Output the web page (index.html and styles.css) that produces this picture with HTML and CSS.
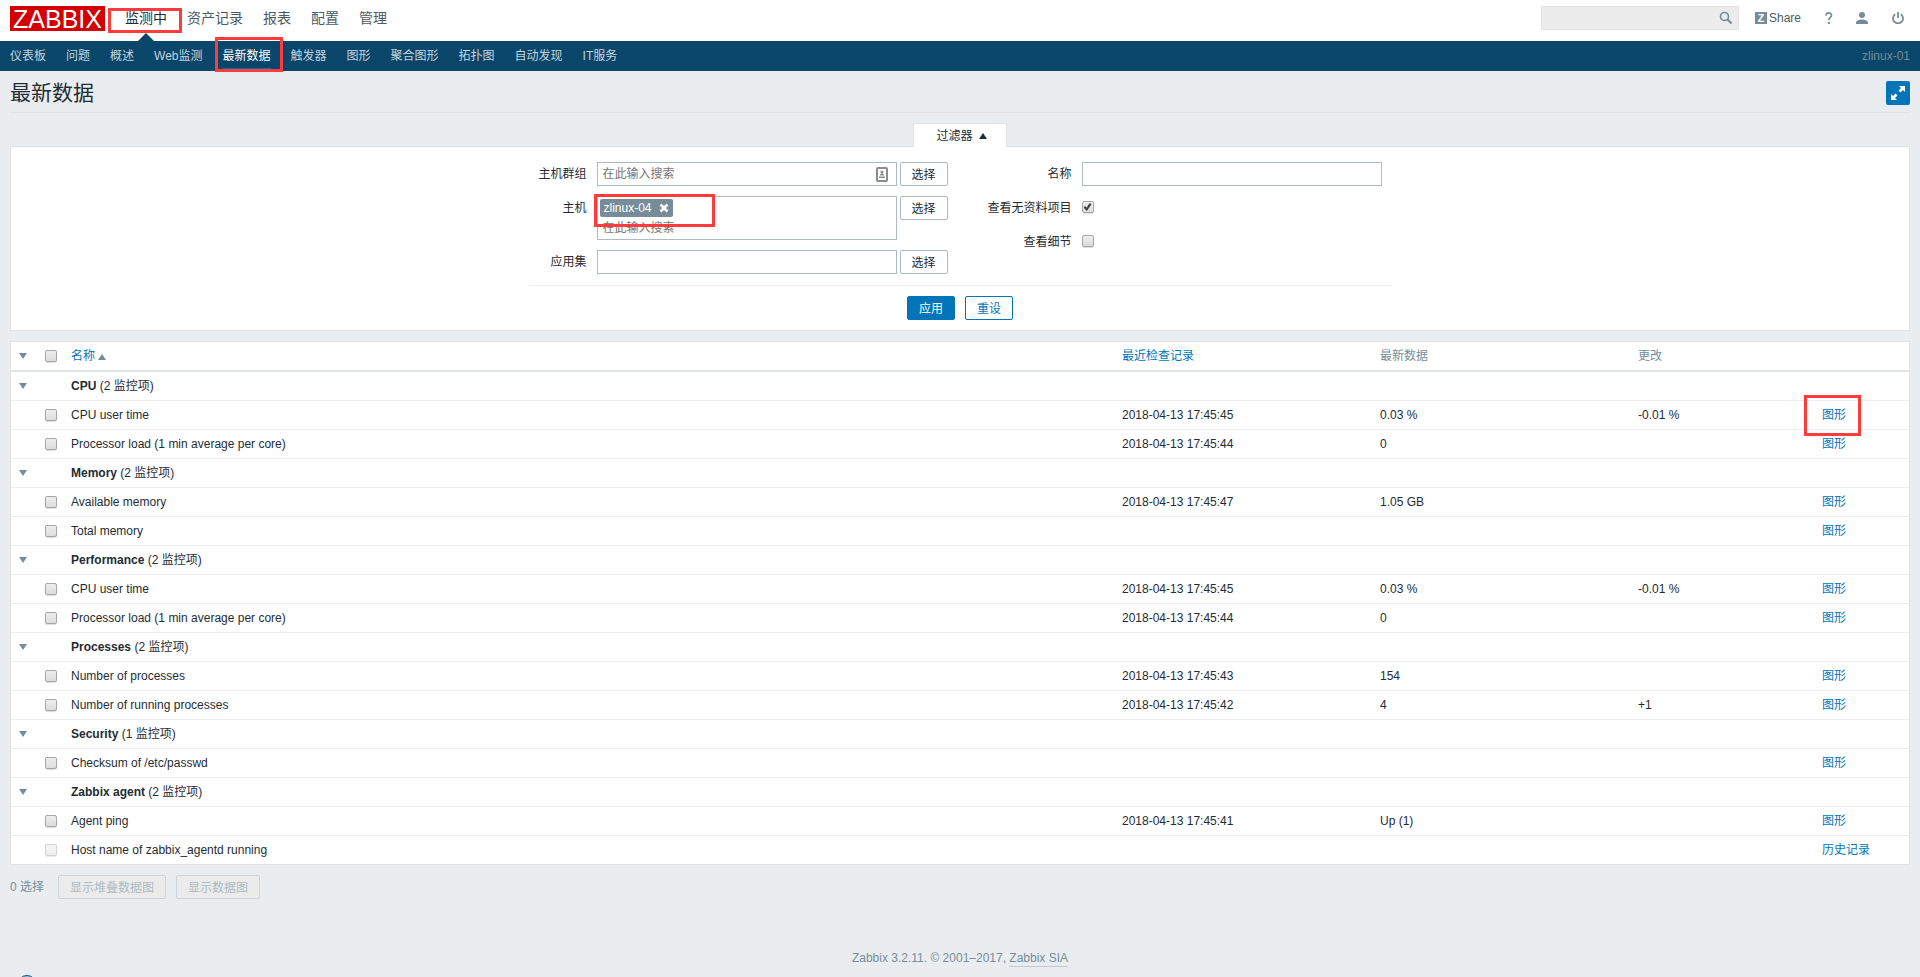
FILE: index.html
```html
<!DOCTYPE html>
<html lang="zh-CN">
<head>
<meta charset="utf-8">
<title>最新数据</title>
<link rel="stylesheet" href="styles.css">
</head>
<body>
<header class="top">
  <a class="logo" href="#">ZABBIX</a>
  <nav class="main-nav">
    <a class="active" href="#">监测中<span class="mark mark-main"></span></a>
    <a href="#">资产记录</a>
    <a href="#">报表</a>
    <a href="#">配置</a>
    <a href="#">管理</a>
  </nav>
  <div class="tools">
    <form class="search">
      <input type="text" aria-label="搜索">
      <button type="button" aria-label="搜索"><svg width="14" height="14" viewBox="0 0 14 14"><circle cx="5.5" cy="5.5" r="4" fill="none" stroke="#768d99" stroke-width="1.6"/><path d="M8.5 8.5L12.5 12.5" stroke="#768d99" stroke-width="2.2"/></svg></button>
    </form>
    <a class="share" href="#"><span class="share-z">Z</span>Share</a>
    <a class="help" href="#" aria-label="帮助"><svg width="8" height="12" viewBox="0 0 8 12"><path d="M1 3.500C1 0 6.500 0 6.500 3.200C6.500 5.500 3.800 5.200 3.800 8.300" fill="none" stroke="#768d99" stroke-width="1.700"/><rect x="2.800" y="10" width="2" height="2" fill="#768d99"/></svg></a>
    <a class="tool" href="#" aria-label="用户"><svg width="12" height="12" viewBox="0 0 12 12"><circle cx="6" cy="3" r="3" fill="#768d99"/><path d="M0 12V10.5C0 8.5 3.5 7.5 6 7.5S12 8.5 12 10.5V12Z" fill="#768d99"/></svg></a>
    <a class="tool" href="#" aria-label="退出"><svg width="12" height="12" viewBox="0 0 12 12"><path d="M3.2 2.2A5 5 0 1 0 8.8 2.2M6 0V6" fill="none" stroke="#768d99" stroke-width="1.8"/></svg></a>
  </div>
</header>
<nav class="sub-nav">
  <a href="#">仪表板</a>
  <a href="#">问题</a>
  <a href="#">概述</a>
  <a href="#">Web监测</a>
  <a class="active" href="#">最新数据<span class="mark mark-sub"></span></a>
  <a href="#">触发器</a>
  <a href="#">图形</a>
  <a href="#">聚合图形</a>
  <a href="#">拓扑图</a>
  <a href="#">自动发现</a>
  <a href="#">IT服务</a>
  <span class="server">zlinux-01</span>
</nav>
<main>
  <div class="title-row">
    <h1>最新数据</h1>
    <button class="fullscreen" type="button" aria-label="全屏"><svg width="16" height="16" viewBox="0 0 16 16" fill="#fff"><path d="M9 1H15V7L13 5L10.5 7.5L8.5 5.5L11 3Z"/><path d="M7 15H1V9L3 11L5.500 8.500L7.500 10.500L5 13Z"/></svg></button>
  </div>

  <section class="filter">
    <button class="filter-tab" type="button">过滤器<span class="tri up dark"></span></button>
    <form class="filter-box">
      <div class="filter-fields">
        <div class="fields-left">
          <label for="groups">主机群组</label>
          <div class="multi">
            <input id="groups" type="text" placeholder="在此输入搜索">
            <svg width="12" height="15" viewBox="0 0 12 15"><rect x="1" y="1" width="10" height="13" rx="1" fill="#fff" stroke="#8c8c8c" stroke-width="2"/><circle cx="6" cy="5" r="1.500" fill="#8c8c8c"/><path d="M4 8.500V7.500L6 6L8 7.500V8.500ZM3 9.500H9V11H3Z" fill="#8c8c8c"/></svg>
          </div>
          <button class="btn" type="button">选择</button>
          <label for="hosts">主机</label>
          <div class="multi tall">
            <span class="tag">zlinux-04<button type="button" aria-label="移除"><svg width="10" height="10" viewBox="0 0 10 10"><path d="M1.500 1.500L8.500 8.500M8.500 1.500L1.500 8.500" stroke="#fff" stroke-width="2.500"/></svg></button></span>
            <input id="hosts" type="text" placeholder="在此输入搜索">
            <span class="mark mark-host"></span>
          </div>
          <button class="btn" type="button">选择</button>
          <label for="app">应用集</label>
          <input class="text" id="app" type="text">
          <button class="btn" type="button">选择</button>
        </div>
        <div class="fields-right">
          <label for="name">名称</label>
          <input class="text" id="name" type="text">
          <label for="nodata">查看无资料项目</label>
          <input id="nodata" type="checkbox" checked>
          <label for="details">查看细节</label>
          <input id="details" type="checkbox">
        </div>
        <div class="actions">
          <button class="btn primary" type="button">应用</button>
          <button class="btn outline" type="button">重设</button>
        </div>
      </div>
    </form>
  </section>

  <table class="data">
    <colgroup><col class="c-toggle"><col class="c-check"><col><col class="c-wide"><col class="c-wide"><col class="c-change"><col class="c-link"></colgroup>
    <thead>
      <tr><th><span class="tri down"></span></th><th><input type="checkbox" aria-label="全选"></th><th><a href="#">名称<span class="tri up"></span></a></th><th><a href="#">最近检查记录</a></th><th>最新数据</th><th>更改</th><th></th></tr>
    </thead>
    <tbody>
      <tr><td><span class="tri down"></span></td><td></td><td colspan="5"><b>CPU</b> (2 监控项)</td></tr>
      <tr><td></td><td><input type="checkbox" aria-label="CPU user time"></td><td>CPU user time</td><td>2018-04-13 17:45:45</td><td>0.03 %</td><td>-0.01 %</td><td><a class="marked" href="#">图形<span class="mark mark-graph"></span></a></td></tr>
      <tr><td></td><td><input type="checkbox" aria-label="Processor load"></td><td>Processor load (1 min average per core)</td><td>2018-04-13 17:45:44</td><td>0</td><td></td><td><a href="#">图形</a></td></tr>
      <tr><td><span class="tri down"></span></td><td></td><td colspan="5"><b>Memory</b> (2 监控项)</td></tr>
      <tr><td></td><td><input type="checkbox" aria-label="Available memory"></td><td>Available memory</td><td>2018-04-13 17:45:47</td><td>1.05 GB</td><td></td><td><a href="#">图形</a></td></tr>
      <tr><td></td><td><input type="checkbox" aria-label="Total memory"></td><td>Total memory</td><td></td><td></td><td></td><td><a href="#">图形</a></td></tr>
      <tr><td><span class="tri down"></span></td><td></td><td colspan="5"><b>Performance</b> (2 监控项)</td></tr>
      <tr><td></td><td><input type="checkbox" aria-label="CPU user time"></td><td>CPU user time</td><td>2018-04-13 17:45:45</td><td>0.03 %</td><td>-0.01 %</td><td><a href="#">图形</a></td></tr>
      <tr><td></td><td><input type="checkbox" aria-label="Processor load"></td><td>Processor load (1 min average per core)</td><td>2018-04-13 17:45:44</td><td>0</td><td></td><td><a href="#">图形</a></td></tr>
      <tr><td><span class="tri down"></span></td><td></td><td colspan="5"><b>Processes</b> (2 监控项)</td></tr>
      <tr><td></td><td><input type="checkbox" aria-label="Number of processes"></td><td>Number of processes</td><td>2018-04-13 17:45:43</td><td>154</td><td></td><td><a href="#">图形</a></td></tr>
      <tr><td></td><td><input type="checkbox" aria-label="Number of running processes"></td><td>Number of running processes</td><td>2018-04-13 17:45:42</td><td>4</td><td>+1</td><td><a href="#">图形</a></td></tr>
      <tr><td><span class="tri down"></span></td><td></td><td colspan="5"><b>Security</b> (1 监控项)</td></tr>
      <tr><td></td><td><input type="checkbox" aria-label="Checksum of /etc/passwd"></td><td>Checksum of /etc/passwd</td><td></td><td></td><td></td><td><a href="#">图形</a></td></tr>
      <tr><td><span class="tri down"></span></td><td></td><td colspan="5"><b>Zabbix agent</b> (2 监控项)</td></tr>
      <tr><td></td><td><input type="checkbox" aria-label="Agent ping"></td><td>Agent ping</td><td>2018-04-13 17:45:41</td><td>Up (1)</td><td></td><td><a href="#">图形</a></td></tr>
      <tr><td></td><td><input type="checkbox" aria-label="Host name" disabled></td><td>Host name of zabbix_agentd running</td><td></td><td></td><td></td><td><a href="#">历史记录</a></td></tr>
    </tbody>
  </table>

  <div class="bulk">
    <span class="count">0 选择</span>
    <button class="btn" type="button" disabled>显示堆叠数据图</button>
    <button class="btn" type="button" disabled>显示数据图</button>
  </div>
</main>
<footer>Zabbix 3.2.11. © 2001–2017, <a href="#">Zabbix SIA</a></footer>
<span class="bubble"></span>
</body>
</html>
```

FILE: styles.css
```css
* { box-sizing: border-box; }
html { height: 100%; }
body {
  margin: 0;
  min-height: 100%;
  display: flex;
  flex-direction: column;
  position: relative;
  overflow: hidden;
  background: #e9edf0;
  color: #1f2c33;
  font: 12px/16px "Liberation Sans", "Noto Sans CJK SC", sans-serif;
}
a { color: #0275b8; text-decoration: none; }
button, input { font: inherit; color: inherit; margin: 0; }
button { cursor: pointer; }
svg { display: block; }

/* Header */
.top { display: flex; align-items: flex-start; height: 41px; padding: 0 10px; background: #fff; }
.logo {
  width: 95px;
  height: 25px;
  margin: 6px 10px 0 0;
  background: #d40000;
  color: #fff;
  font-size: 25px;
  line-height: 26px;
  text-align: center;
}
.main-nav { display: flex; }
.main-nav a { position: relative; padding: 0 10px; font-size: 14px; line-height: 36px; height: 41px; color: #4d5a61; }
.main-nav .active { color: #1f2c33; }
.main-nav .active::after {
  content: "";
  position: absolute;
  left: 50%;
  bottom: 0;
  margin-left: -8px;
  border: 8px solid transparent;
  border-top: 0;
  border-bottom-color: #0a466a;
}
.tools { display: flex; align-items: center; height: 24px; margin: 6px 6px 0 auto; }
.search { display: flex; align-items: center; width: 198px; height: 24px; margin-right: 16px; padding-right: 5px; background: #ececec; border: 1px solid #e2e2e2; }
.search input { flex: 1; min-width: 0; height: 22px; border: 0; padding: 0 4px; background: none; }
.search button { border: 0; padding: 0; background: none; }
.share { display: flex; align-items: center; gap: 2px; margin-right: 24px; color: #4d5a61; }
.share-z { width: 12px; height: 12px; background: #768d99; color: #fff; font-size: 11px; font-weight: bold; line-height: 12px; text-align: center; }
.tool { margin-left: 24px; }
.help + .tool { margin-left: 23px; }

.sub-nav { display: flex; height: 30px; padding: 0 10px; gap: 20px; background: #0a466a; line-height: 30px; }
.sub-nav a { position: relative; color: #c3d4de; height: 29px; }
.sub-nav .active { color: #fff; border-bottom: 2px solid #0275b8; }
.server { margin-left: auto; color: #768d99; }

/* Highlight frames */
.mark { position: absolute; border: 3px solid #ff3b3b; pointer-events: none; z-index: 2; }
.mark-main { inset: 8px -5px 8px -7px; }
.mark-sub { inset: -4px -12px -4px -8px; }
.mark-host { left: -4px; top: -3px; width: 121px; height: 33px; }
.mark-graph { inset: -12px -15px -13px -18px; }

/* Page */
main { padding: 0 10px; }
.title-row { display: flex; align-items: center; justify-content: space-between; height: 42px; padding-top: 3px; border-bottom: 1px solid #dfe4e7; margin-bottom: 10px; }
h1 { margin: 0; font-size: 21px; line-height: 24px; font-weight: 400; }
.fullscreen { width: 24px; height: 24px; padding: 4px; border: 0; border-radius: 2px; background: #0275b8; }

.filter { display: flex; flex-direction: column; align-items: center; }
.filter-tab { display: flex; align-items: center; position: relative; z-index: 1; height: 24px; margin-bottom: -1px; padding: 1px 19px 0 22px; background: #fff; border: 1px solid #dfe4e7; border-bottom: 0; }
.filter-box { display: flex; justify-content: center; width: 100%; padding: 15px 0 10px; background: #fff; border: 1px solid #dfe4e7; }
.filter-fields { display: grid; grid-template-columns: auto auto; column-gap: 40px; }
.fields-left { display: grid; grid-template-columns: 58px 313px 48px; row-gap: 10px; align-items: start; }
.fields-left label, .fields-right label { line-height: 24px; text-align: right; }
.fields-left .multi, .fields-left .text { margin-left: 10px; margin-right: 3px; }
.fields-right { display: grid; grid-template-columns: 84px 300px; column-gap: 10px; grid-auto-rows: 24px; row-gap: 10px; padding-right: 10px; }
.fields-right input[type="checkbox"] { margin-top: 5px; }
.text { height: 24px; border: 1px solid #acbbc2; padding: 0 4px; background: #fff; min-width: 0; }
.multi { position: relative; display: flex; align-items: center; height: 24px; border: 1px solid #acbbc2; padding-right: 8px; }
.multi input { flex: 1; min-width: 0; height: 22px; border: 0; padding: 0 5px; background: none; }
.multi input::placeholder { color: #757575; opacity: 1; }
.tall { height: 44px; flex-direction: column; align-items: flex-start; padding: 2px 2px 0; }
.tall input { flex: none; width: 100%; padding: 0 3px; }
.tag { display: flex; align-items: center; gap: 7px; height: 18px; padding: 0 4px; border-radius: 2px; background: #768d99; color: #fff; }
.tag button { border: 0; padding: 0; background: none; }

.btn { height: 24px; padding: 1px 11px 0; border: 1px solid #acbbc2; border-radius: 2px; background: #fff; line-height: 22px; }
.primary { background: #0275b8; border-color: #0275b8; color: #fff; }
.outline { border-color: #0275b8; color: #0275b8; }
.btn:disabled { background: #ebebeb; border-color: #ccd5d9; color: #acbbc2; }
.actions { grid-column: 1 / -1; display: flex; justify-content: center; gap: 10px; margin-top: 11px; padding-top: 10px; border-top: 1px solid #ebeef0; }

input[type="checkbox"] {
  appearance: none;
  display: block;
  position: relative;
  width: 12px;
  height: 12px;
  border: 1px solid #a6a6a6;
  border-radius: 2px;
  background: linear-gradient(#eee, #dcdcdc);
  box-shadow: 0 1px 1px #ddd;
}
input[type="checkbox"]:disabled { opacity: 0.5; }
input[type="checkbox"]:checked::after {
  content: "";
  position: absolute;
  inset: 1px;
  background: #3c3c3c;
  clip-path: polygon(0 55%, 20% 38%, 38% 60%, 78% 0, 100% 15%, 42% 100%);
}

.tri { display: inline-block; border: 4px solid transparent; }
.tri.up { border-top: 0; border-bottom: 6px solid #768d99; margin-left: 3px; }
.tri.down { display: block; border-bottom: 0; border-top: 6px solid #768d99; width: 8px; }
.tri.up.dark { border-bottom-color: #1f2c33; margin-left: 6px; }

/* Data table */
.data { width: 100%; margin-top: 10px; table-layout: fixed; border-collapse: separate; border-spacing: 0; background: #fff; border: 1px solid #dfe4e7; }
.c-toggle { width: 29px; }
.c-check { width: 26px; }
.c-wide { width: 258px; }
.c-change { width: 184px; }
.c-link { width: 92px; }
.data th, .data td { height: 29px; padding: 0 5px; text-align: left; font-weight: 400; white-space: nowrap; border-bottom: 1px solid #ebeef0; }
.data th { height: 30px; color: #768d99; border-bottom: 2px solid #dfe4e7; }
.data tbody tr:last-child td { height: 28px; border-bottom: 0; }
.data td:first-child, .data th:first-child { padding-left: 8px; }
.data input { margin-bottom: 1px; }
.marked { position: relative; display: inline-block; }

.bulk { display: flex; align-items: center; gap: 10px; margin-top: 10px; }
.count { color: #768d99; margin-right: 4px; }

footer { margin-top: auto; padding-bottom: 10px; text-align: center; color: #768d99; }
footer a { display: inline-block; line-height: 15px; color: #768d99; border-bottom: 1px solid #c0cad0; }
.bubble { position: absolute; left: 17px; bottom: -18px; width: 20px; height: 20px; border: 1px solid #1d4f7c; border-radius: 50%; background: #9cc3e0; }
```
